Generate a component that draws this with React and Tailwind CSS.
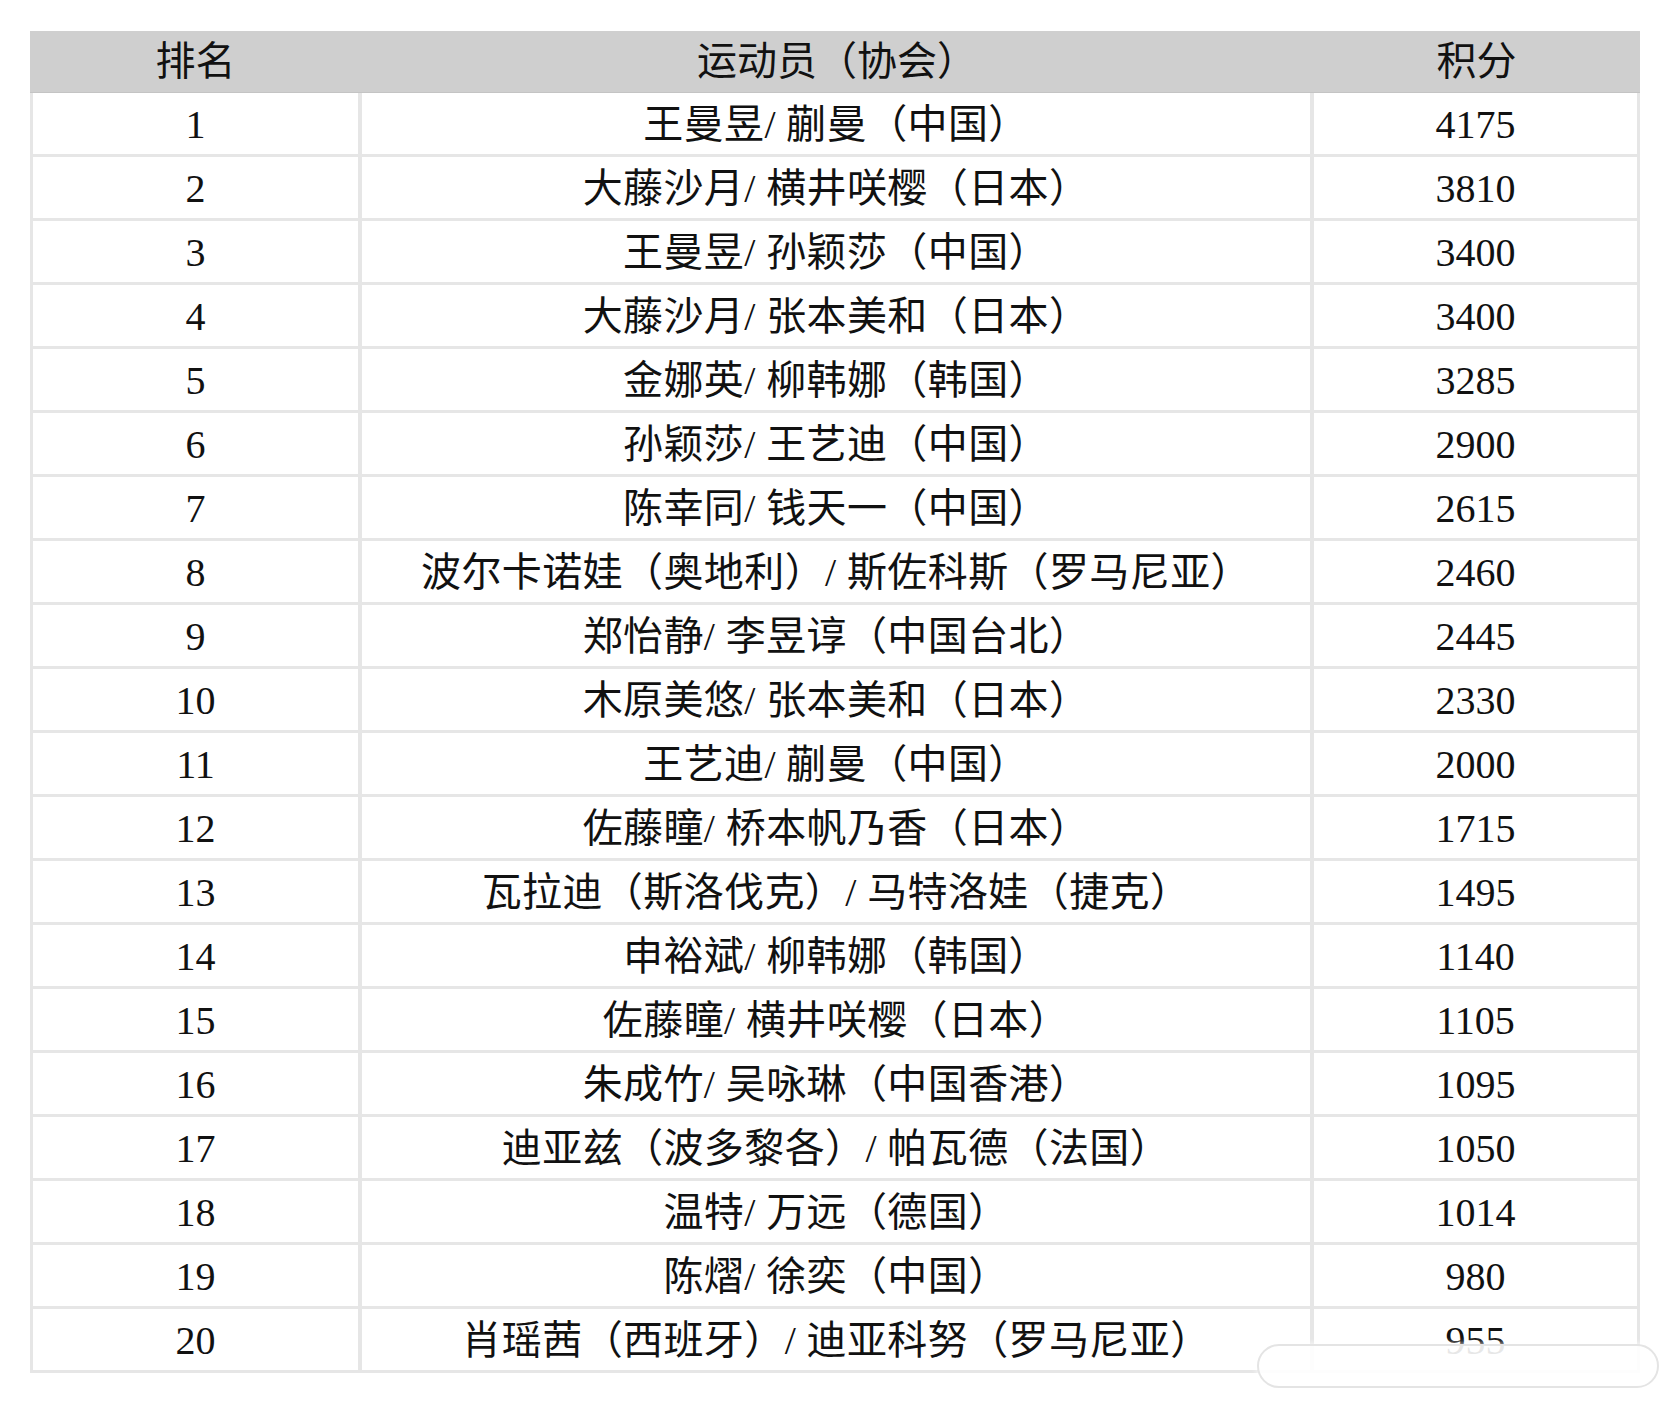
const ROWS = [
  ['1', '王曼昱/ 蒯曼（中国）', '4175'],
  ['2', '大藤沙月/ 横井咲樱（日本）', '3810'],
  ['3', '王曼昱/ 孙颖莎（中国）', '3400'],
  ['4', '大藤沙月/ 张本美和（日本）', '3400'],
  ['5', '金娜英/ 柳韩娜（韩国）', '3285'],
  ['6', '孙颖莎/ 王艺迪（中国）', '2900'],
  ['7', '陈幸同/ 钱天一（中国）', '2615'],
  ['8', '波尔卡诺娃（奥地利）/ 斯佐科斯（罗马尼亚）', '2460'],
  ['9', '郑怡静/ 李昱谆（中国台北）', '2445'],
  ['10', '木原美悠/ 张本美和（日本）', '2330'],
  ['11', '王艺迪/ 蒯曼（中国）', '2000'],
  ['12', '佐藤瞳/ 桥本帆乃香（日本）', '1715'],
  ['13', '瓦拉迪（斯洛伐克）/ 马特洛娃（捷克）', '1495'],
  ['14', '申裕斌/ 柳韩娜（韩国）', '1140'],
  ['15', '佐藤瞳/ 横井咲樱（日本）', '1105'],
  ['16', '朱成竹/ 吴咏琳（中国香港）', '1095'],
  ['17', '迪亚兹（波多黎各）/ 帕瓦德（法国）', '1050'],
  ['18', '温特/ 万远（德国）', '1014'],
  ['19', '陈熠/ 徐奕（中国）', '980'],
  ['20', '肖瑶茜（西班牙）/ 迪亚科努（罗马尼亚）', '955'],
];

const font = "font-['Liberation_Serif','Noto_Sans_CJK_SC',serif]";

export default function App() {
  return (
    <main className={`relative min-h-[1404px] w-[1672px] bg-white pl-[30px] pt-[31px] text-[#111] ${font}`}>
      <div className="w-[1610px]">
        <div className="grid h-[62px] grid-cols-[331px_952px_327px] items-center border-b border-[#c4c4c4] bg-[#cfcfcf] text-[40px] leading-none">
          <div className="text-center">排名</div>
          <div className="text-center">运动员（协会）</div>
          <div className="text-center">积分</div>
        </div>
        <div className="flex flex-col gap-[3px] bg-[#e6e6e6] px-[3px] pb-[3px]">
          {ROWS.map(([rank, name, pts]) => (
            <div key={rank} className="grid h-[61px] grid-cols-[325px_948px_323px] gap-[4px] text-[40px] leading-none">
              <div className="flex items-center justify-center bg-white pt-[2px]">{rank}</div>
              <div className="flex items-center justify-center whitespace-pre bg-white pt-[2px] tracking-[0.4px]">{name}</div>
              <div className="flex items-center justify-center bg-white pt-[2px]">{pts}</div>
            </div>
          ))}
        </div>
      </div>

      {/* watermark */}
      <div className="absolute left-[1257px] top-[1344px] h-[44px] w-[402px] rounded-full border-2 border-[#e4e4e4] bg-white/90 shadow-[0_0_6px_rgba(255,255,255,0.9)]" />
    </main>
  );
}
